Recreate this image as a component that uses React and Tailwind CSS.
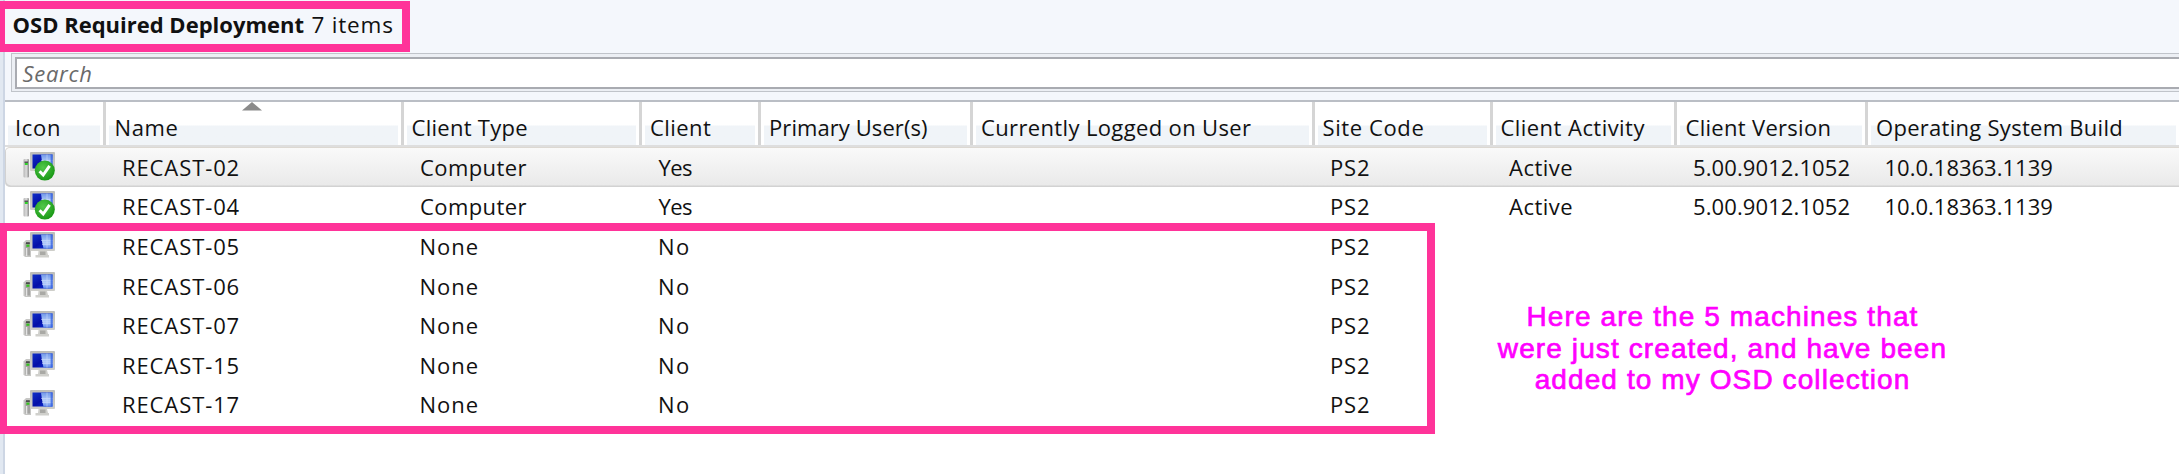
const COLS =
  "grid grid-cols-[101px_298px_238px_119px_212px_342px_178px_184px_191px_1fr]";

const HEADERS = [
  { label: "Icon", cls: "pl-[7px] tracking-[0.7px]" },
  { label: "Name", cls: "pl-[5.5px] tracking-[0.6px]", sorted: true },
  { label: "Client Type", cls: "pl-[4.5px] tracking-[0.28px]" },
  { label: "Client", cls: "pl-[5px] tracking-[0.44px]" },
  { label: "Primary User(s)", cls: "pl-[5px] tracking-[0.08px]" },
  { label: "Currently Logged on User", cls: "pl-[5px] tracking-[0.36px]" },
  { label: "Site Code", cls: "pl-[4.5px] tracking-[0.6px]" },
  { label: "Client Activity", cls: "pl-[4.5px] tracking-[0.45px]" },
  { label: "Client Version", cls: "pl-[5.5px] tracking-[0.3px]" },
  { label: "Operating System Build", cls: "pl-[5px] tracking-[0.28px]", last: true },
];

const ROWS = [
  { name: "RECAST-02", type: "Computer", client: "Yes", active: true, selected: true },
  { name: "RECAST-04", type: "Computer", client: "Yes", active: true },
  { name: "RECAST-05", type: "None", client: "No" },
  { name: "RECAST-06", type: "None", client: "No" },
  { name: "RECAST-07", type: "None", client: "No" },
  { name: "RECAST-15", type: "None", client: "No" },
  { name: "RECAST-17", type: "None", client: "No" },
];

function Defs() {
  return (
    <svg className="absolute size-0" aria-hidden="true">
      <defs>
        <linearGradient id="dark" x1="0" y1="0" x2="1" y2="1">
          <stop offset="0" stopColor="#1030c8" />
          <stop offset="0.5" stopColor="#0510a8" />
          <stop offset="1" stopColor="#0a38e0" />
        </linearGradient>
        <linearGradient id="light" x1="0" y1="0" x2="0" y2="1">
          <stop offset="0" stopColor="#6f97ea" />
          <stop offset="0.6" stopColor="#b9d0fa" />
          <stop offset="1" stopColor="#5c86ee" />
        </linearGradient>
        <linearGradient id="frame" x1="0" y1="0" x2="0" y2="1">
          <stop offset="0" stopColor="#bdbdb9" />
          <stop offset="1" stopColor="#cfcfca" />
        </linearGradient>
        <linearGradient id="tower" x1="0" y1="0" x2="1" y2="0">
          <stop offset="0" stopColor="#b4b4b4" />
          <stop offset="0.5" stopColor="#dcdcdc" />
          <stop offset="1" stopColor="#8f8f8f" />
        </linearGradient>
        <radialGradient id="ok" cx="0.4" cy="0.35" r="0.7">
          <stop offset="0" stopColor="#52c84a" />
          <stop offset="1" stopColor="#169612" />
        </radialGradient>
      </defs>
    </svg>
  );
}

function Screen({ y }) {
  return (
    <g transform={`translate(0 ${y})`}>
      <rect x="7" y="0" width="25" height="19" rx="1" fill="url(#frame)" />
      <rect x="9.5" y="2.5" width="20" height="14" fill="url(#dark)" />
      <path d="M18 2.5H29.5V16.5H20.5Q18.8 10 18 2.5Z" fill="url(#light)" />
      <path d="M18 8.5H29.5M19 12.5H29.5M24 2.5V16.5" stroke="#dbe7ff" strokeWidth="0.7" opacity="0.7" />
      <rect x="27.6" y="2.5" width="1.9" height="14" fill="#2f5fe0" opacity="0.75" />
    </g>
  );
}

function MachineIcon({ ok }) {
  return ok ? (
    <svg viewBox="0 0 32 32" className="block size-8">
      <rect x="0.5" y="8" width="5.5" height="18.5" rx="1" fill="url(#tower)" />
      <rect x="1.5" y="10.5" width="3.5" height="1.6" fill="#555" />
      <rect x="1.8" y="12" width="3" height="2" fill="#2fd12a" />
      <Screen y={1} />
      <circle cx="21.8" cy="19.6" r="10" fill="url(#ok)" />
      <path d="M16.6 20.2L20.2 24L26.6 14.8" fill="none" stroke="#fff" strokeWidth="3" />
    </svg>
  ) : (
    <svg viewBox="0 0 32 32" className="block size-8">
      <path d="M0.5 12.5L3 10H8V27H2L0.5 25.5Z" fill="#c6c6c4" />
      <path d="M2.3 13H7V25.5H2.3Z" fill="#a3a3a1" />
      <path d="M3.6 18V26" stroke="#e4e4e4" strokeWidth="1.4" />
      <rect x="3" y="12.2" width="3.8" height="1.8" fill="#4a4a4a" />
      <rect x="3.4" y="14.6" width="3" height="2.2" fill="#35c41f" />
      <Screen y={2} />
      <path d="M15.5 21H24L25 25H26V27.5H12.5V25H15Z" fill="#d0d0cc" />
      <path d="M17 21.5H22.5V25H17Z" fill="#a9a9a5" />
    </svg>
  );
}

function HeaderCell({ label, cls, sorted, last }) {
  return (
    <div className={`relative bg-white px-[3px] ${last ? "" : "border-r-[3px] border-[#d5d5d5]"}`}>
      <div
        className={`h-full bg-linear-to-b from-white from-[23px] to-[#f0f4f8] to-[24px] pt-[10px] leading-[30px] whitespace-nowrap ${cls}`}
      >
        {label}
      </div>
      {sorted && (
        <svg viewBox="0 0 20 9" className="absolute top-0 left-[136px] h-[9px] w-5">
          <path d="M0 8.5L10 0L20 8.5Z" fill="#8a8a8a" />
        </svg>
      )}
    </div>
  );
}

function Row({ row }) {
  return (
    <div
      className={`${COLS} h-[39.6px] items-center rounded-l-[5px] leading-[30px] whitespace-nowrap ${
        row.selected
          ? "bg-linear-to-b from-[#fafafa] to-[#e9e9e9] shadow-[inset_1px_-1.5px_0_#d2d2d2,inset_0_1px_0_#dcd8d2]"
          : ""
      }`}
    >
      <div className="pl-[18px]">
        <MachineIcon ok={row.active} />
      </div>
      <span className="pl-[16px] tracking-[0.9px]">{row.name}</span>
      <span className={row.type === "None" ? "pl-[15.5px] tracking-[1px]" : "pl-[16px] tracking-[0.4px]"}>
        {row.type}
      </span>
      <span className={row.client === "No" ? "pl-[16px] tracking-[1.5px]" : "pl-[16.5px] tracking-[-0.6px]"}>
        {row.client}
      </span>
      <span />
      <span />
      <span className="pl-[15px] tracking-[0.8px]">PS2</span>
      <span className="pl-[16px] tracking-[0.5px]">{row.active ? "Active" : ""}</span>
      <span className="pl-[16px] tracking-[0.1px]">{row.active ? "5.00.9012.1052" : ""}</span>
      <span className="pl-[16.5px]">{row.active ? "10.0.18363.1139" : ""}</span>
    </div>
  );
}

export default function App() {
  return (
    <div className="relative flex h-[474px] w-[2179px] overflow-hidden bg-[#f4f7fc] font-['Open_Sans','Noto_Sans',sans-serif] text-[22px] text-[#111]">
      <Defs />
      <div className="w-[5px] shrink-0 border-r-2 border-[#cdd6e4] bg-[#e1e8f1]" />
      <div className="flex min-w-0 flex-1 flex-col">
        <div className="flex h-[53px] items-baseline pt-[9px] pl-[7.5px] leading-[30px] whitespace-nowrap">
          <span className="w-[299px] font-bold">OSD Required Deployment</span>
          <span className="text-[22.5px] tracking-[0.8px]">7 items</span>
        </div>
        <div className="-mr-2 ml-[6px] h-[39px] border-[1.5px] border-[#c0c4ca] bg-[#eceff4] p-[2.5px]">
          <div className="h-full border-2 border-[#a9abb1] bg-white pl-[6px] leading-[29px] tracking-[0.7px] text-[#6a6a6a] italic">
            Search
          </div>
        </div>
        <div className="mt-2 flex flex-1 flex-col border-t-2 border-[#babec5] bg-white">
          <div className={`${COLS} h-[43px] shrink-0`}>
            {HEADERS.map((h) => (
              <HeaderCell key={h.label} {...h} />
            ))}
          </div>
          <div className="h-[2px] shrink-0 bg-[#dedede]" />
          {ROWS.map((r) => (
            <Row key={r.name} row={r} />
          ))}
        </div>
      </div>
      <div className="absolute top-px left-[-3px] h-[51px] w-[413px] border-8 border-[#ff3399]" />
      <div className="absolute top-[223px] -left-px h-[211px] w-[1436px] border-8 border-[#ff3399]" />
      <div className="absolute top-[301px] left-[1472.5px] w-[500px] text-center font-['Liberation_Sans',Arial,sans-serif] text-[28px] leading-[31.5px] tracking-[1.1px] whitespace-nowrap text-[#ff00ff] [-webkit-text-stroke:0.7px_#ff00ff]">
        <div>Here are the 5 machines that</div>
        <div>were just created, and have been</div>
        <div>added to my OSD collection</div>
      </div>
    </div>
  );
}
